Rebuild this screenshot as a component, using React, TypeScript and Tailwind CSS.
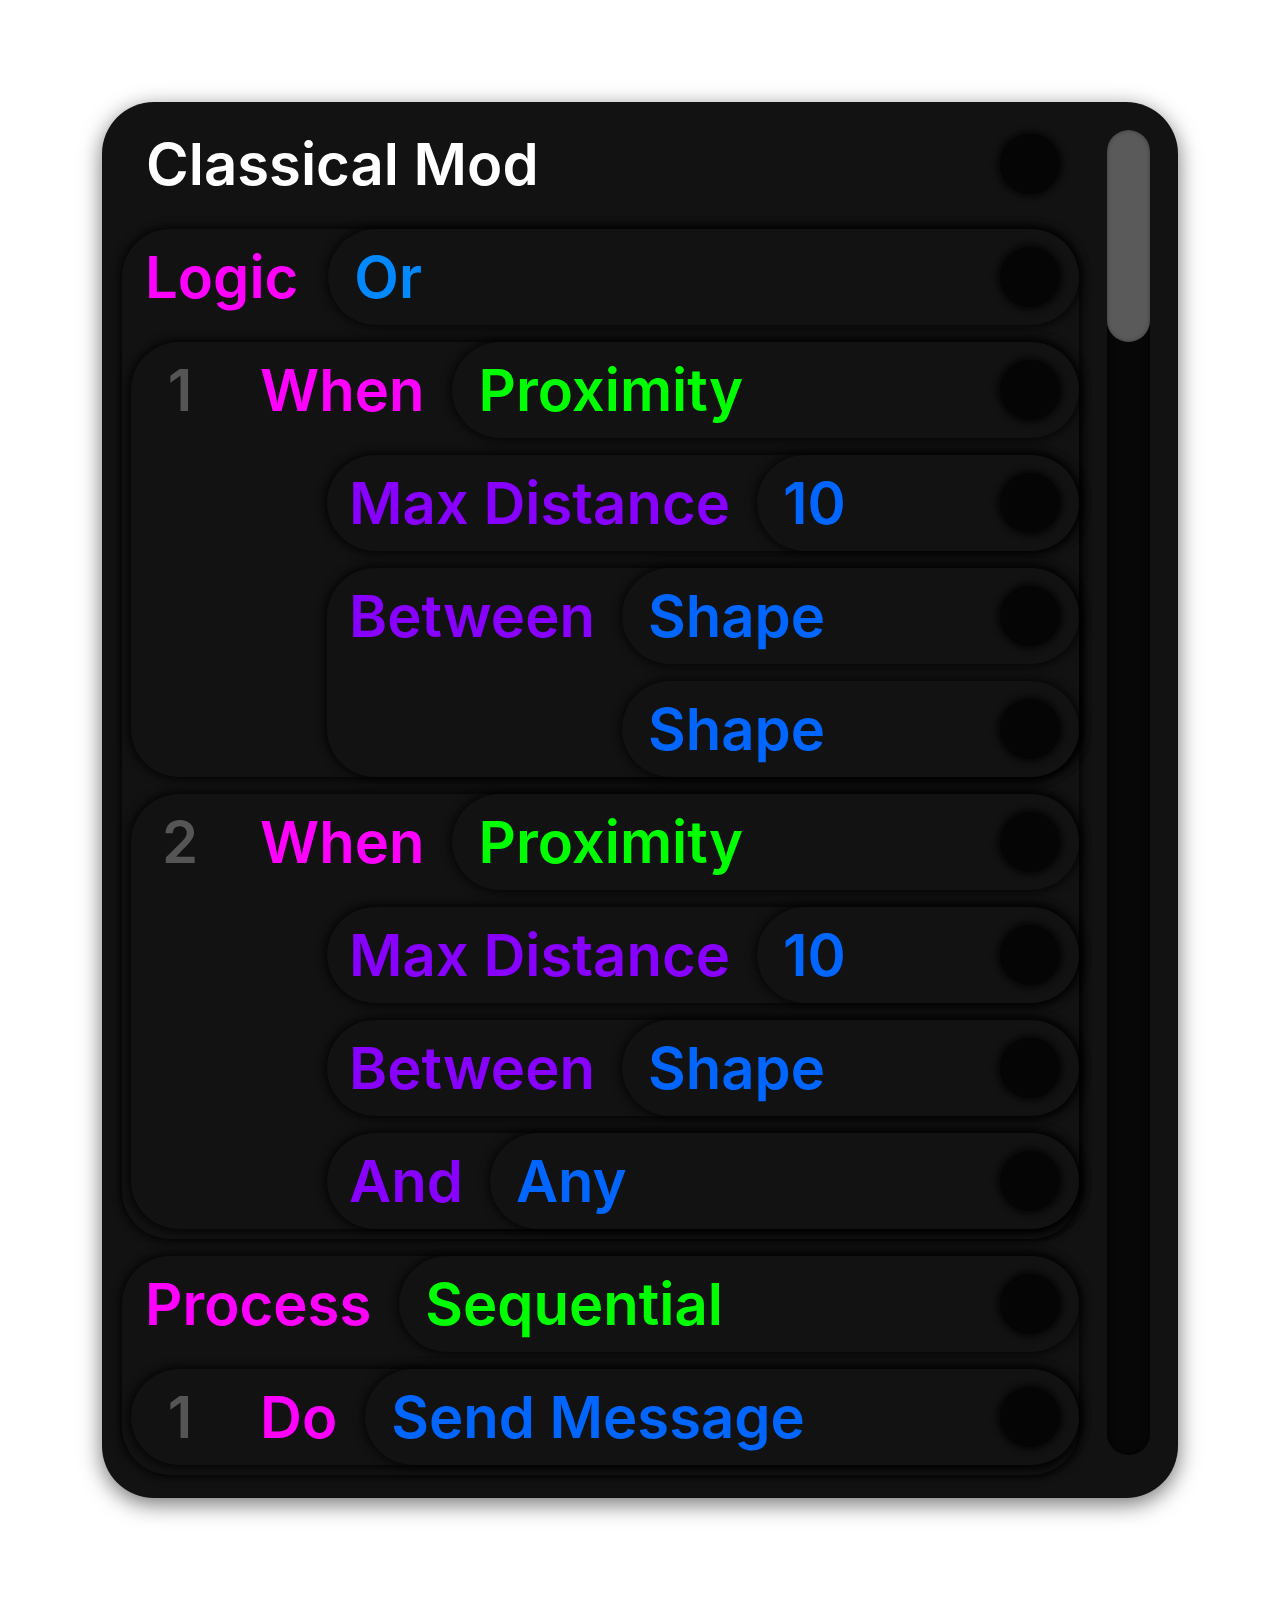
import type { ReactNode } from "react";

// colour per token kind
const TONE = {
    key: "text-[#ff00ff]",
    enum: "text-[#00ff00]",
    op: "text-[#0088ff]",
    ref: "text-[#0066ff]",
    arg: "text-[#8800ff]",
};

const BLOCK = "rounded-[48px] bg-[#121212] shadow-[0_0_10px_2px_rgba(0,0,0,0.85)]";

function Knob() {
    return <div className="h-[60px] w-[60px] shrink-0 rounded-full bg-[#050505] shadow-[0_0_5px_4px_rgba(0,0,0,0.5)]" />;
}

function Pill({ text, tone, gap = "ml-[28px]" }: { text: string; tone: string; gap?: string }) {
    return (
        <div className={`${gap} flex h-[96px] flex-1 items-center justify-between rounded-full bg-[#121212] pl-[26px] pr-[19px] shadow-[0_0_10px_2px_rgba(0,0,0,0.75)]`}>
            <span className={tone}>{text}</span>
            <Knob />
        </div>
    );
}

function StepHead({ n, verb, value, tone }: { n: number; verb: string; value: string; tone: string }) {
    return (
        <div className="flex h-[96px] items-center">
            <span className="ml-[29px] w-[40px] text-center text-[#555555]">{n}</span>
            <span className={`ml-[60px] ${TONE.key}`}>{verb}</span>
            <Pill text={value} tone={tone} />
        </div>
    );
}

function Field({ label, children }: { label: string; children: ReactNode }) {
    return (
        <div className={`${BLOCK} grid grid-cols-[auto_1fr] gap-x-[27px] gap-y-[17px]`}>
            <div className={`flex h-[96px] items-center pl-[22px] ${TONE.arg}`}>{label}</div>
            <div className="flex flex-col gap-[17px]">{children}</div>
        </div>
    );
}

function Slot({ text, tone }: { text: string; tone: string }) {
    return (
        <div className="flex">
            <Pill text={text} tone={tone} gap="ml-0" />
        </div>
    );
}

export default function App() {
    return (
        <div className="min-h-[1600px] bg-white pt-[102px] font-['Inter','Noto_Sans',sans-serif] text-[58px] font-semibold leading-none">
            <div className="mx-auto flex h-[1396px] w-[1076px] overflow-hidden rounded-[52px] bg-[#121212] shadow-[0_6px_22px_rgba(0,0,0,0.55)]">
                <div className="flex w-[977px] shrink-0 flex-col gap-[17px] pl-[20px] pt-[14px]">
                    <div className="flex h-[96px] shrink-0 items-center justify-between pl-[24px] pr-[19px] text-white">
                        <span>Classical Mod</span>
                        <Knob />
                    </div>

                    {/* Logic */}
                    <div className={`${BLOCK} shrink-0 pb-[10px]`}>
                        <div className="flex h-[96px] items-center pl-[23px]">
                            <span className={TONE.key}>Logic</span>
                            <Pill text="Or" tone={TONE.op} gap="ml-[30px]" />
                        </div>
                        <div className="flex flex-col gap-[17px] pl-[9px] pt-[17px]">
                            <div className={BLOCK}>
                                <StepHead n={1} verb="When" value="Proximity" tone={TONE.enum} />
                                <div className="flex flex-col gap-[17px] pl-[196px] pt-[17px]">
                                    <Field label="Max Distance">
                                        <Slot text="10" tone={TONE.ref} />
                                    </Field>
                                    <Field label="Between">
                                        <Slot text="Shape" tone={TONE.ref} />
                                        <Slot text="Shape" tone={TONE.ref} />
                                    </Field>
                                </div>
                            </div>
                            <div className={BLOCK}>
                                <StepHead n={2} verb="When" value="Proximity" tone={TONE.enum} />
                                <div className="flex flex-col gap-[17px] pl-[196px] pt-[17px]">
                                    <Field label="Max Distance">
                                        <Slot text="10" tone={TONE.ref} />
                                    </Field>
                                    <Field label="Between">
                                        <Slot text="Shape" tone={TONE.ref} />
                                    </Field>
                                    <Field label="And">
                                        <Slot text="Any" tone={TONE.ref} />
                                    </Field>
                                </div>
                            </div>
                        </div>
                    </div>

                    {/* Process */}
                    <div className={`${BLOCK} shrink-0 pb-[10px]`}>
                        <div className="flex h-[96px] items-center pl-[23px]">
                            <span className={TONE.key}>Process</span>
                            <Pill text="Sequential" tone={TONE.enum} />
                        </div>
                        <div className="flex flex-col gap-[17px] pl-[9px] pt-[17px]">
                            <div className={BLOCK}>
                                <StepHead n={1} verb="Do" value="Send Message" tone={TONE.ref} />
                            </div>
                        </div>
                    </div>
                </div>

                {/* scrollbar */}
                <div className="mb-[43px] ml-[28px] mt-[28px] w-[43px] shrink-0 rounded-full bg-[#070707] shadow-[inset_0_0_6px_rgba(0,0,0,0.9)]">
                    <div className="h-[212px] rounded-full bg-[#5a5a5a] shadow-[inset_0_0_4px_rgba(0,0,0,0.35)]" />
                </div>
            </div>
        </div>
    );
}
